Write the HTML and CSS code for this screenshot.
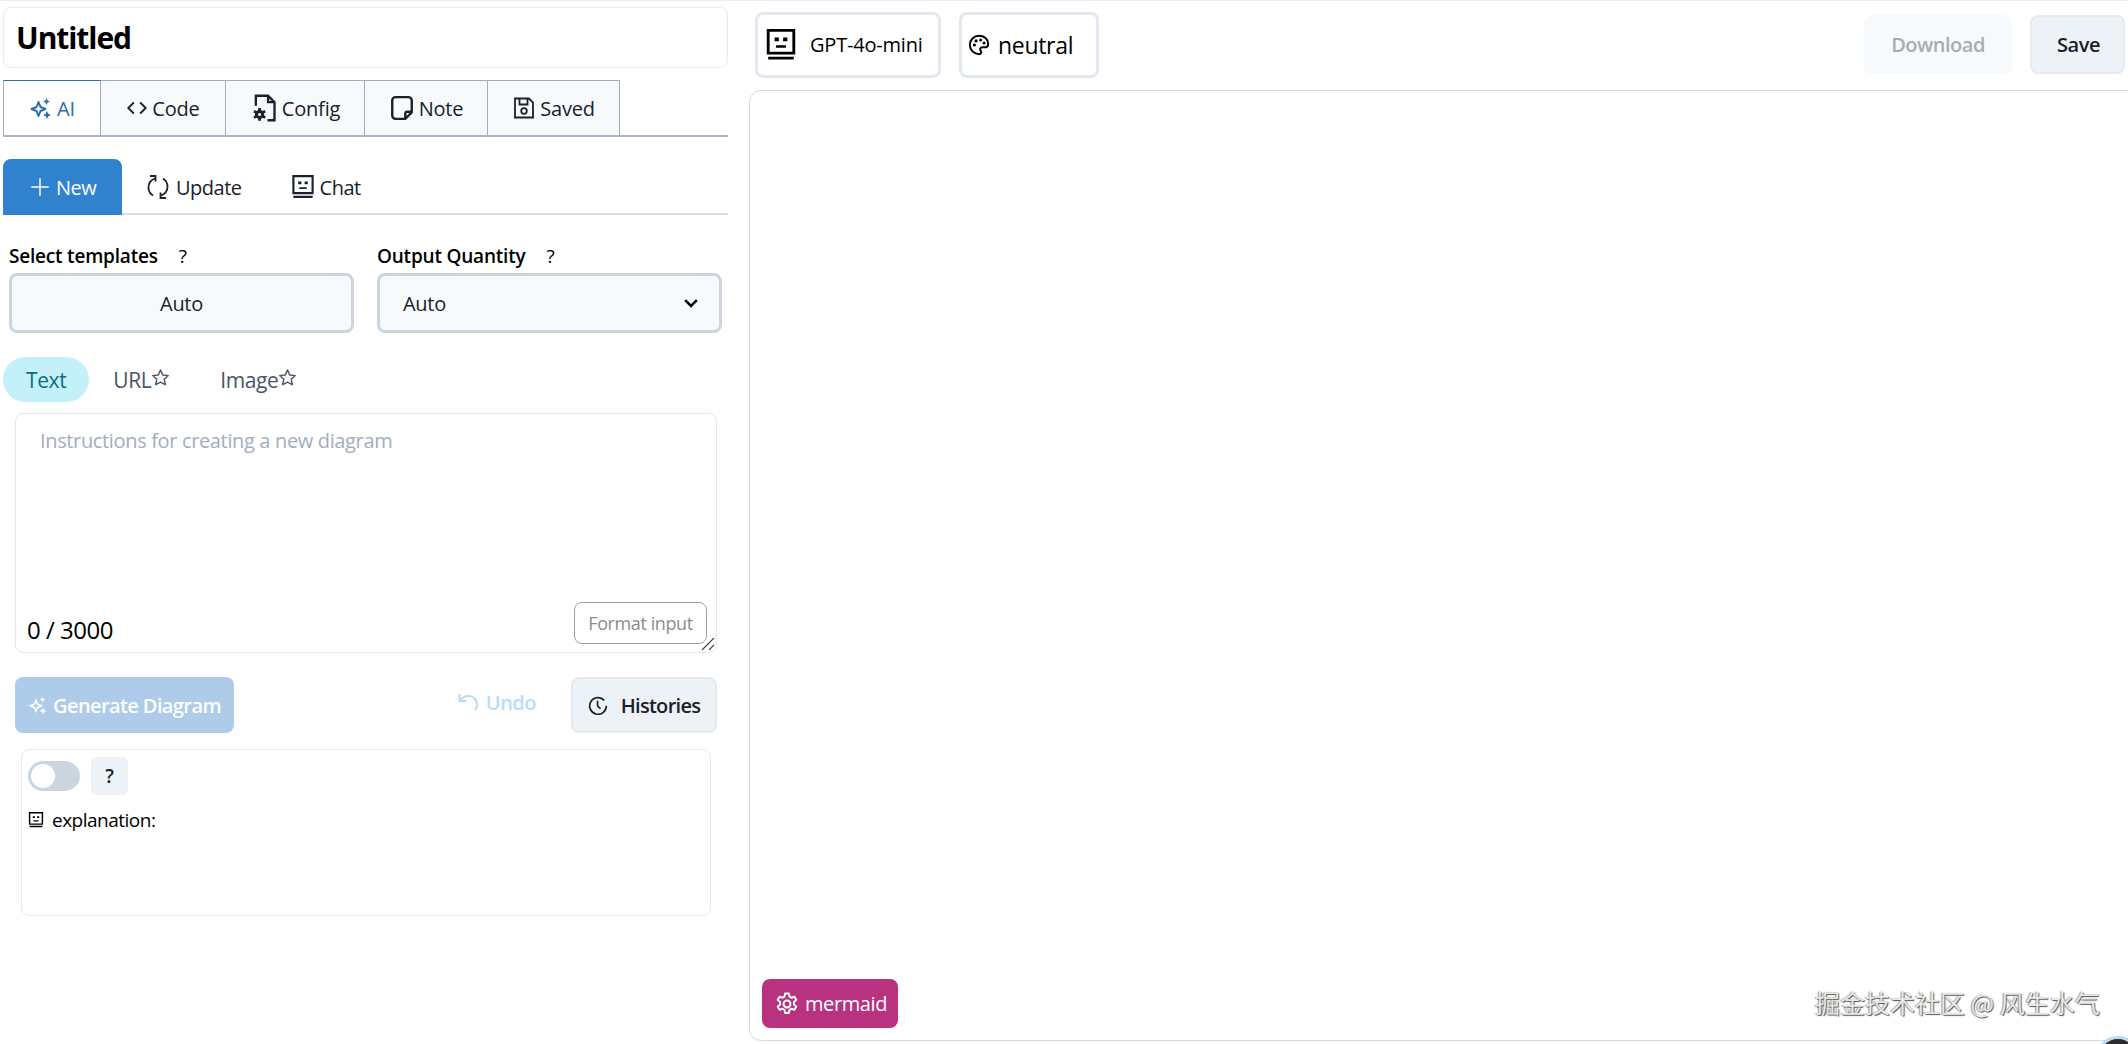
FILE: index.html
```html
<!DOCTYPE html>
<html lang="en">
<head>
<meta charset="utf-8">
<title>Untitled</title>
<link rel="stylesheet" href="styles.css">
</head>
<body>
<svg class="defs" width="0" height="0">
  <symbol id="i-bot" viewBox="2 1 20 22.500"><path fill="none" stroke="currentColor" stroke-width="2" d="M3 2h18v16H3z"/><path fill="currentColor" d="M7.500 7h3v2.600h-3zM13.500 7h3v2.600h-3zM8.500 12.500h7v1.700h-7zM3 20.500h18v2H3z"/></symbol>
  <symbol id="i-spark" viewBox="0 0 24 24"><path fill="none" stroke="currentColor" stroke-width="2" stroke-linejoin="round" d="M9.500 6l2 5 5 2-5 2-2 5-2-5-5-2 5-2z"/><path fill="currentColor" d="M17.500 2l1.100 2.400L21 5.500l-2.400 1.100-1.100 2.400-1.100-2.400L14 5.500l2.400-1.100zM18 15l1.300 2.700L22 19l-2.700 1.300L18 23l-1.300-2.700L14 19l2.700-1.300z"/></symbol>
  <symbol id="i-code" viewBox="0 0 24 24"><path fill="none" stroke="currentColor" stroke-width="2" d="M8.500 6l-6 6 6 6M15.500 6l6 6-6 6"/></symbol>
  <symbol id="i-config" viewBox="0 0 24 24"><path fill="none" stroke="currentColor" stroke-width="2" d="M5 10V1.500h10.500l5.500 5.500v15.500h-6M15.500 1.500V7H21"/><path fill="currentColor" fill-rule="evenodd" d="M7 12h2.400v1.700l1.500.9 1.500-.9 1.200 2-1.500.9v1.800l1.500.9-1.200 2-1.500-.9-1.500.9v1.700H7v-1.700l-1.500-.9-1.500.9-1.200-2 1.500-.9v-1.800l-1.500-.9 1.200-2 1.500.9 1.500-.9zM8.200 16.200a1.400 1.400 0 1 0 .01 0z"/></symbol>
  <symbol id="i-note" viewBox="0 0 24 24"><path fill="none" stroke="currentColor" stroke-width="2.200" stroke-linejoin="round" d="M15 22H6a3 3 0 0 1-3-3V5a3 3 0 0 1 3-3h12a3 3 0 0 1 3 3v11zM21 15.500h-4a2 2 0 0 0-2 2V22"/></symbol>
  <symbol id="i-save" viewBox="0 0 24 24"><path fill="none" stroke="currentColor" stroke-width="1.800" d="M3 2.500h14l4 4v15H3zM7.500 2.500v6h8v-6"/><circle cx="12" cy="15" r="2.800" fill="none" stroke="currentColor" stroke-width="1.800"/></symbol>
  <symbol id="i-plus" viewBox="0 0 24 24"><path fill="none" stroke="currentColor" stroke-width="1.600" d="M12 2.500v19M2.500 12h19"/></symbol>
  <symbol id="i-cycle" viewBox="0 0 24 24"><path fill="none" stroke="currentColor" stroke-width="1.800" d="M9 3.500C5 5 2.500 8.300 2.500 12.500c0 3.500 1.800 6.300 4.500 8M15 20.500c4-1.500 6.500-4.800 6.500-9 0-3.500-1.800-6.300-4.500-8"/><path fill="none" stroke="currentColor" stroke-width="1.800" d="M4 1h5.500v5.500M20 23h-5.500v-5.500"/></symbol>
  <symbol id="i-star" viewBox="0 0 24 24"><path fill="none" stroke="currentColor" stroke-width="1.800" stroke-linejoin="round" d="M12 2.500l2.900 6.300 6.900.8-5.100 4.700 1.400 6.800-6.100-3.400-6.100 3.400 1.400-6.800-5.100-4.700 6.900-.8z"/></symbol>
  <symbol id="i-history" viewBox="0 0 24 24"><path fill="none" stroke="currentColor" stroke-width="2" d="M19.500 6.500A10 10 0 1 0 22 13M11.500 7v6l3.500 3.500"/></symbol>
  <symbol id="i-undo" viewBox="0 0 24 24"><path fill="none" stroke="currentColor" stroke-width="2.200" d="M2.500 3v7h7M3 10c2-3 5-5 8.500-5a8.500 8.500 0 0 1 6.500 14"/></symbol>
  <symbol id="i-palette" viewBox="0 0 24 24"><path fill="none" stroke="currentColor" stroke-width="2.200" stroke-linejoin="round" d="M12 2C6.500 2 2 6.300 2 11.800S6.500 22 12 22c1.500 0 2.400-1 2.400-2.300 0-.6-.3-1.100-.6-1.500-.4-.5-.6-1-.6-1.500 0-1.200 1-2.200 2.300-2.200H18c2.300 0 4-1.700 4-4C22 5.500 17.500 2 12 2z"/><g fill="currentColor"><circle cx="7" cy="12" r="1.700"/><circle cx="8.800" cy="7.500" r="1.700"/><circle cx="13.800" cy="6.500" r="1.700"/><circle cx="17.500" cy="9.800" r="1.700"/></g></symbol>
  <symbol id="i-gear" viewBox="0 0 24 24"><path fill="none" stroke="currentColor" stroke-width="1.800" stroke-linejoin="round" d="M10.300 2.300h3.400l.6 2.900 1.800 1 2.800-.9 1.700 2.900-2.200 2v2.200l2.200 2-1.700 2.900-2.800-.9-1.800 1-.6 2.900h-3.400l-.6-2.900-1.800-1-2.800.9-1.700-2.900 2.200-2v-2.200l-2.200-2 1.700-2.900 2.800.9 1.800-1z"/><circle cx="12" cy="12" r="3.200" fill="none" stroke="currentColor" stroke-width="1.800"/></symbol>
  <symbol id="i-chevron" viewBox="0 0 24 24"><path fill="none" stroke="currentColor" stroke-width="3" d="M5 8.500l7 7 7-7"/></symbol>
</svg>

<div class="app">
  <aside class="left">
    <div class="title-box"><h1 class="title">Untitled</h1></div>

    <nav class="tabs">
      <a class="tab tab-active"><svg class="ico ico-24"><use href="#i-spark"/></svg>AI</a>
      <a class="tab"><svg class="ico ico-22"><use href="#i-code"/></svg>Code</a>
      <a class="tab"><svg class="ico ico-28"><use href="#i-config"/></svg>Config</a>
      <a class="tab"><svg class="ico ico-26"><use href="#i-note"/></svg>Note</a>
      <a class="tab"><svg class="ico ico-24"><use href="#i-save"/></svg>Saved</a>
    </nav>

    <nav class="subtabs">
      <a class="subtab subtab-active"><svg class="ico ico-22"><use href="#i-plus"/></svg>New</a>
      <a class="subtab"><svg class="ico ico-24"><use href="#i-cycle"/></svg>Update</a>
      <a class="subtab"><svg class="ico ico-24"><use href="#i-bot"/></svg>Chat</a>
    </nav>

    <div class="options">
      <div class="option">
        <label class="option-label">Select templates<span class="q">?</span></label>
        <button class="select select-center">Auto</button>
      </div>
      <div class="option">
        <label class="option-label">Output Quantity<span class="q">?</span></label>
        <div class="select select-left">Auto<svg class="ico ico-chev"><use href="#i-chevron"/></svg></div>
      </div>
    </div>

    <div class="pills">
      <a class="pill pill-active">Text</a>
      <a class="pill">URL<svg class="ico ico-star"><use href="#i-star"/></svg></a>
      <a class="pill">Image<svg class="ico ico-star"><use href="#i-star"/></svg></a>
    </div>

    <div class="input-box">
      <div class="placeholder">Instructions for creating a new diagram</div>
      <div class="input-foot">
        <span class="count">0 / 3000</span>
        <button class="format">Format input</button>
      </div>
      <svg class="grip" width="14" height="14" viewBox="0 0 14 14"><path fill="none" stroke="#444" stroke-width="1.200" d="M1 13L13 1M8 13l5-5"/></svg>
    </div>

    <div class="actions">
      <button class="generate"><svg class="ico ico-20"><use href="#i-spark"/></svg>Generate Diagram</button>
      <button class="undo"><svg class="ico ico-24"><use href="#i-undo"/></svg>Undo</button>
      <button class="histories"><svg class="ico ico-20"><use href="#i-history"/></svg>Histories</button>
    </div>

    <section class="explain">
      <div class="explain-top">
        <span class="toggle"><span class="knob"></span></span>
        <span class="help">?</span>
      </div>
      <div class="explain-text"><svg class="ico ico-16"><use href="#i-bot"/></svg>explanation:</div>
    </section>
  </aside>

  <main class="right">
    <header class="toolbar">
      <button class="chip chip-model"><svg class="ico ico-32"><use href="#i-bot"/></svg>GPT-4o-mini</button>
      <button class="chip chip-theme"><svg class="ico ico-22"><use href="#i-palette"/></svg>neutral</button>
      <span class="spacer"></span>
      <button class="btn btn-download">Download</button>
      <button class="btn btn-save">Save</button>
    </header>
    <div class="canvas">
      <button class="mermaid"><svg class="ico ico-26"><use href="#i-gear"/></svg>mermaid</button>
    </div>
  </main>
</div>

<div class="watermark">掘金技术社区 @ 风生水气</div>
<div class="avatar"></div>
</body>
</html>
```

FILE: styles.css
```css
* { box-sizing: border-box; }
html, body { margin: 0; height: 100%; overflow: hidden; background: #fff; }
body {
  font-family: "Open Sans", "Noto Sans", "Noto Sans CJK SC", sans-serif;
  color: #1a202c;
  border-top: 1px solid #eceef1;
}
.defs { position: absolute; }
.ico { flex: none; display: block; }
.ico-16 { width: 16px; height: 16px; }
.ico-20 { width: 20px; height: 20px; }
.ico-22 { width: 22px; height: 22px; }
.ico-24 { width: 24px; height: 24px; }
.ico-26 { width: 26px; height: 26px; }
.ico-28 { width: 28px; height: 28px; }
.ico-32 { width: 32px; height: 32px; }
button { font: inherit; color: inherit; background: none; border: 0; padding: 0; }

.app { display: flex; height: 1043px; }

/* left column */
.left { width: 749px; flex: none; padding: 6px 21px 0 3px; }
.title-box {
  height: 61px; border: 1px solid #e8ebef; border-radius: 8px;
  display: flex; align-items: center; padding: 0 12px;
}
.title { margin: 0; font-size: 30px; font-weight: 700; color: #000; letter-spacing: -1.05px; }

.tabs {
  display: flex; height: 57px; margin-top: 12px;
  border-bottom: 2px solid #a9b5c4;
}
.tab {
  display: flex; align-items: center; justify-content: center; gap: 4px;
  height: 55px; background: #f7fafc; font-size: 20px; letter-spacing: -0.2px;
  border: 1px solid #a0aec0; border-left: 0; border-bottom: 0;
}
.tab:nth-child(1) { width: 98px; background: #fff; color: #2b6cb0; border-left: 1px solid #a0aec0; border-top-color: #2b6cb0; }
.tab:nth-child(2) { width: 125px; }
.tab:nth-child(3) { width: 139px; }
.tab:nth-child(4) { width: 123px; }
.tab:nth-child(5) { width: 132px; }

.subtabs { display: flex; height: 56px; margin-top: 22px; border-bottom: 2px solid #dcdfe4; }
.subtab { display: flex; align-items: center; gap: 6px; font-size: 20px; letter-spacing: -0.5px; height: 54px; padding: 2px 24px 0; }
.subtab + .subtab + .subtab { gap: 5px; padding-left: 25px; }
.subtab-active { width: 119px; padding: 0 0 0 26px; background: #3182ce; color: #fff; border-radius: 8px 8px 0 0; height: 56px; gap: 5px; }

.options { display: flex; gap: 23px; padding: 0 6px; margin-top: 28px; }
.option { width: 345px; }
.option-label { display: block; font-size: 19px; font-weight: 600; letter-spacing: -0.2px; color: #000; line-height: 26px; }
.q { font-weight: 400; margin-left: 21px; }
.select {
  height: 60px; margin-top: 4px; width: 345px; border: 3px solid #cbd5e0; border-radius: 8px; background: #f7fafc;
  font-size: 20px; letter-spacing: -0.3px; display: flex; align-items: center;
}
.select-center { justify-content: center; }
.select-left { justify-content: space-between; padding: 0 18px 0 23px; }
.ico-chev { width: 20px; height: 20px; color: #000; }

.pills { display: flex; margin-top: 24px; height: 45px; }
.pill {
  display: flex; align-items: center; font-size: 21px; letter-spacing: -0.4px; color: #4a5568;
  padding: 0 24px; height: 45px; border-radius: 23px;
}
.pill-active { background: #c4f1f9; color: #086f83; padding: 0 23px; }
.pill + .pill + .pill { padding-left: 26px; }
.ico-star { width: 19px; height: 19px; margin-top: -4px; }

.input-box {
  position: relative; height: 240px; margin: 11px 0 0 12px; width: 702px;
  border: 1px solid #e2e8f0; border-radius: 8px; padding: 13px 11px 0 11px;
  display: flex; flex-direction: column; justify-content: space-between;
}
.placeholder { font-size: 20px; letter-spacing: -0.35px; color: #a0aec0; padding-left: 13px; }
.input-foot { display: flex; justify-content: space-between; align-items: flex-start; height: 42px; margin-bottom: 8px; margin-right: -2px; }
.count { font-size: 24px; letter-spacing: -0.5px; color: #000; margin-top: 11px; }
.format {
  width: 133px; height: 42px; border: 1.500px solid #a0a0a0; border-radius: 8px;
  font-size: 18px; letter-spacing: -0.4px; color: #8c8c8c; background: #fff;
}
.grip { position: absolute; right: 1px; bottom: 1px; }

.actions { display: flex; align-items: center; margin: 24px 0 0 12px; width: 702px; height: 56px; }
.generate {
  display: flex; align-items: center; justify-content: center; gap: 5px;
  width: 219px; height: 56px; background: #aecbea; color: #fff; border-radius: 8px;
  font-size: 20px; font-weight: 600; letter-spacing: -0.6px;
}
.undo {
  display: flex; align-items: center; gap: 5px; margin-left: auto; margin-right: 35px; margin-top: -5px;
  font-size: 20px; font-weight: 600; letter-spacing: -0.5px; color: #bcdcf5;
}
.histories {
  display: flex; align-items: center; gap: 13px; justify-content: center;
  width: 146px; height: 56px; background: #edf2f7; border: 2px solid #e5eaf1; border-radius: 8px;
  font-size: 20px; font-weight: 600; letter-spacing: -0.7px;
}
.explain {
  height: 167px; width: 690px; margin: 16px 0 0 18px;
  border: 1px solid #e8ebef; border-radius: 8px; padding: 6px 6px 0 6px;
}
.explain-top { display: flex; align-items: center; gap: 11px; height: 40px; }
.toggle { width: 52px; height: 30px; border-radius: 15px; background: #cbd5e0; padding: 3px; display: block; }
.knob { display: block; width: 24px; height: 24px; border-radius: 50%; background: #fff; }
.help {
  width: 37px; height: 38px; display: flex; align-items: center; justify-content: center;
  background: #edf2f7; border-radius: 6px; font-weight: 600; font-size: 19px;
}
.explain-text { display: flex; align-items: center; gap: 8px; margin-top: 11px; font-size: 19px; letter-spacing: -0.5px; color: #000; }

/* right column */
.right { flex: 1; min-width: 0; }
.toolbar { display: flex; align-items: center; height: 89px; padding: 0 3px 2px 6px; }
.chip {
  height: 66px; border: 3px solid #e2e8f0; border-radius: 8px; display: flex; align-items: center;
  background: #fff; color: #000;
}
.chip-model { width: 186px; padding-left: 7px; gap: 13px; font-size: 20px; letter-spacing: -0.2px; }
.chip-theme { width: 140px; margin-left: 18px; padding-left: 6px; gap: 8px; font-size: 23px; letter-spacing: -0.3px; }
.spacer { flex: 1; }
.btn { height: 59px; border-radius: 8px; font-size: 20px; font-weight: 600; letter-spacing: -0.5px; }
.btn-download { width: 148px; background: #f7fafc; color: #a9acb1; }
.btn-save { width: 95px; margin-left: 18px; padding-left: 2px; background: #edf2f7; border: 2px solid #e5eaf1; }
.canvas {
  position: relative; height: 951px; margin-right: -12px;
  border: 1px solid #d5d8dc; border-radius: 12px;
}
.mermaid {
  position: absolute; left: 12px; bottom: 12px; width: 136px; height: 49px;
  display: flex; align-items: center; gap: 5px; padding-left: 12px;
  background: #b83280; color: #fff; border-radius: 8px; font-size: 20px; font-weight: 400; letter-spacing: -0.4px;
}

/* overlays */
.watermark {
  position: absolute; left: 1815px; top: 985px; font-size: 25px; line-height: 34px;
  font-family: "Noto Sans CJK SC", "Open Sans", sans-serif; letter-spacing: 0;
  color: #e8e8e8; text-shadow: 1px 1px 1px #555, -1px 0 1px #999;
}
.avatar {
  position: absolute; left: 2096px; top: 1036px; width: 44px; height: 44px; border-radius: 50%;
  background: #2d2a2a; border: 3px solid #bcdcf5;
}
```
